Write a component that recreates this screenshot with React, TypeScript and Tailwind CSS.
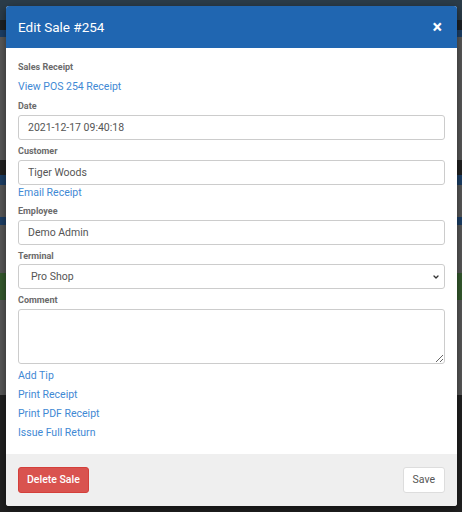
import { ChevronDown } from 'lucide-react';

const LINK = 'block text-[10.5px] leading-[15px] text-[#3f89d4] cursor-pointer';
const LABEL = 'block text-[9px] leading-[13px] font-bold text-[#6b6b6b]';
const INPUT =
  'block w-full h-[25px] rounded-[3px] border border-[#ccc] bg-white pl-[9px] text-[10.5px] text-[#555] outline-none';

function Backdrop() {
  // page behind the dimmed overlay
  return (
    <div className="flex flex-col h-full">
      <div className="h-[20px] bg-[#2b3c49]" />
      <div className="h-[10px] bg-[#1d2125]" />
      <div className="h-[7px] bg-[#1d3f66]" />
      <div className="h-[123px] bg-[#585858]" />
      <div className="h-[15px] bg-[#222]" />
      <div className="h-[10px] bg-[#1d3f66]" />
      <div className="h-[32px] bg-[#585858]" />
      <div className="h-[8px] bg-[#1d3f66]" />
      <div className="h-[48px] bg-[#585858]" />
      <div className="h-[27px] bg-[#355a2e]" />
      <div className="h-[95px] bg-[#585858]" />
      <div className="flex-1 bg-[#212121]" />
    </div>
  );
}

export default function App() {
  return (
    <div
      className="relative w-[462px] h-[512px] overflow-hidden"
      style={{ fontFamily: 'Roboto, "Liberation Sans", sans-serif' }}
    >
      <Backdrop />

      <div className="absolute left-[6px] top-[6px] w-[451px] h-[500px] bg-white rounded-[3px] overflow-hidden shadow-[0_3px_9px_rgba(0,0,0,0.5)] flex flex-col">
        <div className="h-[42px] bg-[#2066b1] flex items-center justify-between pl-[12px] pr-[15px] shrink-0">
          <span className="text-[13.5px] leading-[18px] text-white">Edit Sale #254</span>
          <span className="text-white text-[18px] font-bold leading-none">×</span>
        </div>

        <div className="flex-1 px-[12px] pt-[13px]">
          <span className={LABEL}>Sales Receipt</span>
          <a className={`${LINK} mt-[5px]`}>View POS 254 Receipt</a>

          <label className={`${LABEL} mt-[6px]`}>Date</label>
          <input className={`${INPUT} mt-[2px]`} defaultValue="2021-12-17 09:40:18" />

          <label className={`${LABEL} mt-[5px]`}>Customer</label>
          <input className={`${INPUT} mt-[2px]`} defaultValue="Tiger Woods" />
          <a className={LINK}>Email Receipt</a>

          <label className={`${LABEL} mt-[5px]`}>Employee</label>
          <input className={`${INPUT} mt-[2px]`} defaultValue="Demo Admin" />

          <label className={`${LABEL} mt-[5px]`}>Terminal</label>
          <div className="relative mt-[1px]">
            <div className={`${INPUT} flex items-center pl-[12px]`}>Pro Shop</div>
            <ChevronDown
              className="absolute right-[5px] top-[9px] w-[8px] h-[8px] text-[#333]"
              strokeWidth={4}
            />
          </div>

          <label className={`${LABEL} mt-[5px]`}>Comment</label>
          <textarea className="block w-full h-[55px] mt-[2px] rounded-[3px] border border-[#ccc] bg-white text-[10.5px] text-[#555] outline-none" />

          <div className="flex flex-col mt-[4px] gap-[4px]">
            <a className={LINK}>Add Tip</a>
            <a className={LINK}>Print Receipt</a>
            <a className={LINK}>Print PDF Receipt</a>
            <a className={LINK}>Issue Full Return</a>
          </div>
        </div>

        <div className="h-[52px] shrink-0 bg-[#efefef] flex items-center justify-between px-[12px]">
          <button className="h-[26px] px-[8px] rounded-[3px] bg-[#d9534f] border border-[#d43f3a] text-white text-[10.5px] font-medium">
            Delete Sale
          </button>
          <button className="h-[26px] px-[9px] rounded-[3px] bg-white border border-[#ddd] text-[#555] text-[10.5px]">
            Save
          </button>
        </div>
      </div>
    </div>
  );
}
